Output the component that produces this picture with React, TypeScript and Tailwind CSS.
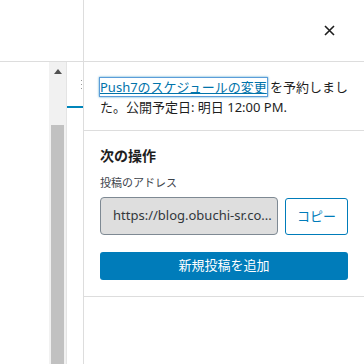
import React from 'react';

const font = '"Noto Sans", "Noto Sans CJK JP", sans-serif';

function ScrollColumn() {
  return (
    <div className="flex flex-1">
      <div className="w-[49px]" />
      <div className="flex w-[17px] flex-col bg-[#f1f1f1]">
        <div className="flex h-[18px] items-center justify-center pt-[1px]">
          <svg width="8" height="5" viewBox="0 0 8 5">
            <path d="M0 5 L4 0 L8 5 Z" fill="#505050" />
          </svg>
        </div>
        <div className="h-[45px]" />
        <div className="mx-[2px] flex-1 bg-[#c1c1c1]" />
      </div>
      <div className="flex w-[17px] flex-col border-l border-[#e4e4e4]">
        <div className="flex h-[44px] items-start justify-end pt-[18px]">
          <div className="flex flex-col gap-[3px] pr-[1px]">
            <span className="h-[1px] w-[1px] bg-[#999]" />
            <span className="h-[1px] w-[1px] bg-[#999]" />
            <span className="h-[1px] w-[1px] bg-[#999]" />
          </div>
        </div>
        <div className="h-[2px] bg-[#0085ba]" />
      </div>
    </div>
  );
}

export default function App() {
  return (
    <div
      className="flex h-[364px] w-[364px] overflow-hidden bg-white text-[#1e1e1e]"
      style={{ fontFamily: font }}
    >
      <div className="flex w-[84px] shrink-0 flex-col border-r border-[#dddddd]">
        <div className="h-[62px] border-b border-[#dddddd]" />
        <ScrollColumn />
      </div>

      <div className="flex min-w-0 flex-1 flex-col">
        <div className="flex h-[62px] items-center justify-end border-b border-[#dddddd] pr-[29px]">
          <svg width="11" height="11" viewBox="0 0 11 11" className="mb-[1px]">
            <path d="M1 1 L10 10 M10 1 L1 10" stroke="#1e1e1e" strokeWidth="1.6" />
          </svg>
        </div>

        <div className="border-b border-[#dddddd] pl-4 pr-[8px] pt-[15px] pb-[13px] text-[13px] leading-[20px]">
          <a
            href="#"
            className="text-[#0073aa] underline shadow-[0_0_0_1px_#5b9dd9,0_0_2px_1px_rgba(30,140,190,0.8)]"
          >
            Push7のスケジュールの変更
          </a>{' '}
          を予約しました。公開予定日: 明日 12:00 PM.
        </div>

        <div className="flex flex-col border-b border-[#dddddd] px-4 pt-[15px] pb-4">
          <h2 className="text-[14px] font-bold leading-[20px]">次の操作</h2>
          <div className="mt-[8px] text-[11px] leading-[18px] text-[#3c434a]">投稿のアドレス</div>
          <div className="mt-[5px] flex gap-[7px]">
            <div className="flex h-[38px] min-w-0 flex-1 items-center overflow-hidden whitespace-nowrap rounded-[4px] border border-[#7e8993] bg-[#dedede] px-3 text-[13px] text-[#32373c]">
              https://blog.obuchi-sr.co...
            </div>
            <button className="mt-[1px] h-[37px] w-[63px] shrink-0 rounded-[3px] border border-[#007cba] bg-white text-[13px] text-[#007cba]">
              コピー
            </button>
          </div>
          <button className="mt-[17px] h-[28px] w-full rounded-[3px] bg-[#007cba] text-[13px] text-white">
            新規投稿を追加
          </button>
        </div>
      </div>
    </div>
  );
}
